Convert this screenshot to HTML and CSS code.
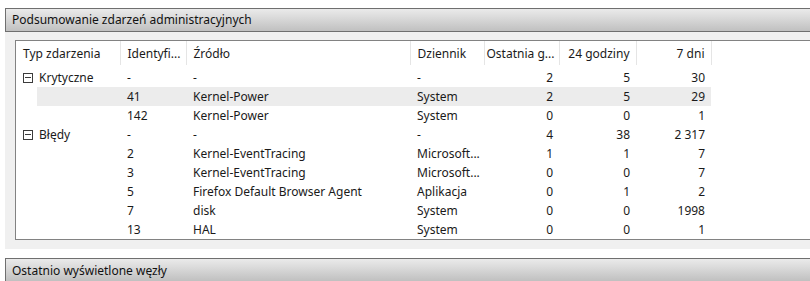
FILE: index.html
```html
<!DOCTYPE html>
<html lang="pl">
<head>
    <meta charset="UTF-8">
    <title>Podsumowanie zdarzeń administracyjnych</title>
    <link rel="stylesheet" href="styles.css">
</head>
<body>
    <div class="page">
        <div class="section-bar">Podsumowanie zdarzeń administracyjnych</div>
        <div class="section-body">
            <div class="grid-box">
                <table class="events">
                    <colgroup>
                        <col class="c-type">
                        <col class="c-id">
                        <col class="c-src">
                        <col class="c-log">
                        <col class="c-num1">
                        <col class="c-num2">
                        <col class="c-num3">
                        <col>
                    </colgroup>
                    <thead>
                        <tr>
                            <th>Typ zdarzenia</th>
                            <th title="Identyfikator zdarzenia">Identyfi...</th>
                            <th>Źródło</th>
                            <th>Dziennik</th>
                            <th class="num" title="Ostatnia godzina">Ostatnia g...</th>
                            <th class="num">24 godziny</th>
                            <th class="num">7 dni</th>
                            <th class="filler"></th>
                        </tr>
                    </thead>
                    <tbody>
                        <tr class="spacer"><td colspan="8"></td></tr>
                        <tr class="group">
                            <td><span class="toggle"></span>Krytyczne</td>
                            <td>-</td><td>-</td><td>-</td>
                            <td class="num">2</td><td class="num">5</td><td class="num">30</td><td></td>
                        </tr>
                        <tr class="selected">
                            <td></td>
                            <td>41</td><td>Kernel-Power</td><td>System</td>
                            <td class="num">2</td><td class="num">5</td><td class="num">29</td><td class="off"></td>
                        </tr>
                        <tr>
                            <td></td>
                            <td>142</td><td>Kernel-Power</td><td>System</td>
                            <td class="num">0</td><td class="num">0</td><td class="num">1</td><td></td>
                        </tr>
                        <tr class="group">
                            <td><span class="toggle"></span>Błędy</td>
                            <td>-</td><td>-</td><td>-</td>
                            <td class="num">4</td><td class="num">38</td><td class="num">2 317</td><td></td>
                        </tr>
                        <tr>
                            <td></td>
                            <td>2</td><td>Kernel-EventTracing</td><td>Microsoft...</td>
                            <td class="num">1</td><td class="num">1</td><td class="num">7</td><td></td>
                        </tr>
                        <tr>
                            <td></td>
                            <td>3</td><td>Kernel-EventTracing</td><td>Microsoft...</td>
                            <td class="num">0</td><td class="num">0</td><td class="num">7</td><td></td>
                        </tr>
                        <tr>
                            <td></td>
                            <td>5</td><td>Firefox Default Browser Agent</td><td>Aplikacja</td>
                            <td class="num">0</td><td class="num">1</td><td class="num">2</td><td></td>
                        </tr>
                        <tr>
                            <td></td>
                            <td>7</td><td>disk</td><td>System</td>
                            <td class="num">0</td><td class="num">0</td><td class="num">1998</td><td></td>
                        </tr>
                        <tr>
                            <td></td>
                            <td>13</td><td>HAL</td><td>System</td>
                            <td class="num">0</td><td class="num">0</td><td class="num">1</td><td></td>
                        </tr>
                    </tbody>
                </table>
            </div>
        </div>
        <div class="section-bar next">Ostatnio wyświetlone węzły</div>
    </div>
</body>
</html>
```

FILE: styles.css
```css
html, body {
    margin: 0;
    padding: 0;
    background: #fff;
    overflow: hidden;
}
body {
    font-family: "Noto Sans", "Segoe UI", sans-serif;
    font-size: 12px;
    color: #1a1a1a;
}
.page {
    width: 830px;
    padding: 8px 0 0 5px;
}
.section-bar {
    height: 22px;
    line-height: 21px;
    padding-left: 6px;
    border: 1px solid #6f6f6f;
    border-right: none;
    background: linear-gradient(to bottom, #eaeaea 0%, #dedede 30%, #c0c0c0 100%);
    color: #111;
    white-space: nowrap;
}
.section-bar.next {
    margin-top: 9px;
    line-height: 23px;
}
.section-body {
    background: #f0f0f0;
    padding: 8px 0 9px 10px;
}
.grid-box {
    background: #fff;
    border: 1px solid #828282;
    border-right: none;
    height: 198px;
}
.events {
    border-collapse: collapse;
    table-layout: fixed;
    width: 100%;
}
.c-type { width: 104px; }
.c-id { width: 66px; }
.c-src { width: 224px; }
.c-log { width: 74px; }
.c-num1 { width: 75px; }
.c-num2 { width: 77px; }
.c-num3 { width: 75px; }
.events th,
.events td {
    padding: 0 4px 0 7px;
    white-space: nowrap;
    overflow: hidden;
    text-align: left;
    font-weight: normal;
}
.events th {
    height: 24px;
    border-right: 1px solid #e5e5e5;
}
.events th.filler {
    border-right: none;
}
.events td {
    height: 19px;
    line-height: 19px;
}
.events .num {
    text-align: right;
    padding: 0 6px 0 2px;
}
.events tr.spacer td {
    height: 3px;
    line-height: 3px;
    padding: 0;
}
.toggle {
    display: inline-block;
    width: 8px;
    height: 8px;
    border: 1px solid #3c3c3c;
    margin: 0 6px 0 0;
    position: relative;
    vertical-align: -1px;
}
.toggle::after {
    content: "";
    position: absolute;
    left: 1px;
    right: 1px;
    top: 3px;
    height: 1px;
    background: #3c3c3c;
}
.selected td {
    background: #ececec;
}
.selected td:first-child {
    background: linear-gradient(to right, #fff 21px, #ececec 21px);
}
.selected td.off {
    background: #fff;
}
```
